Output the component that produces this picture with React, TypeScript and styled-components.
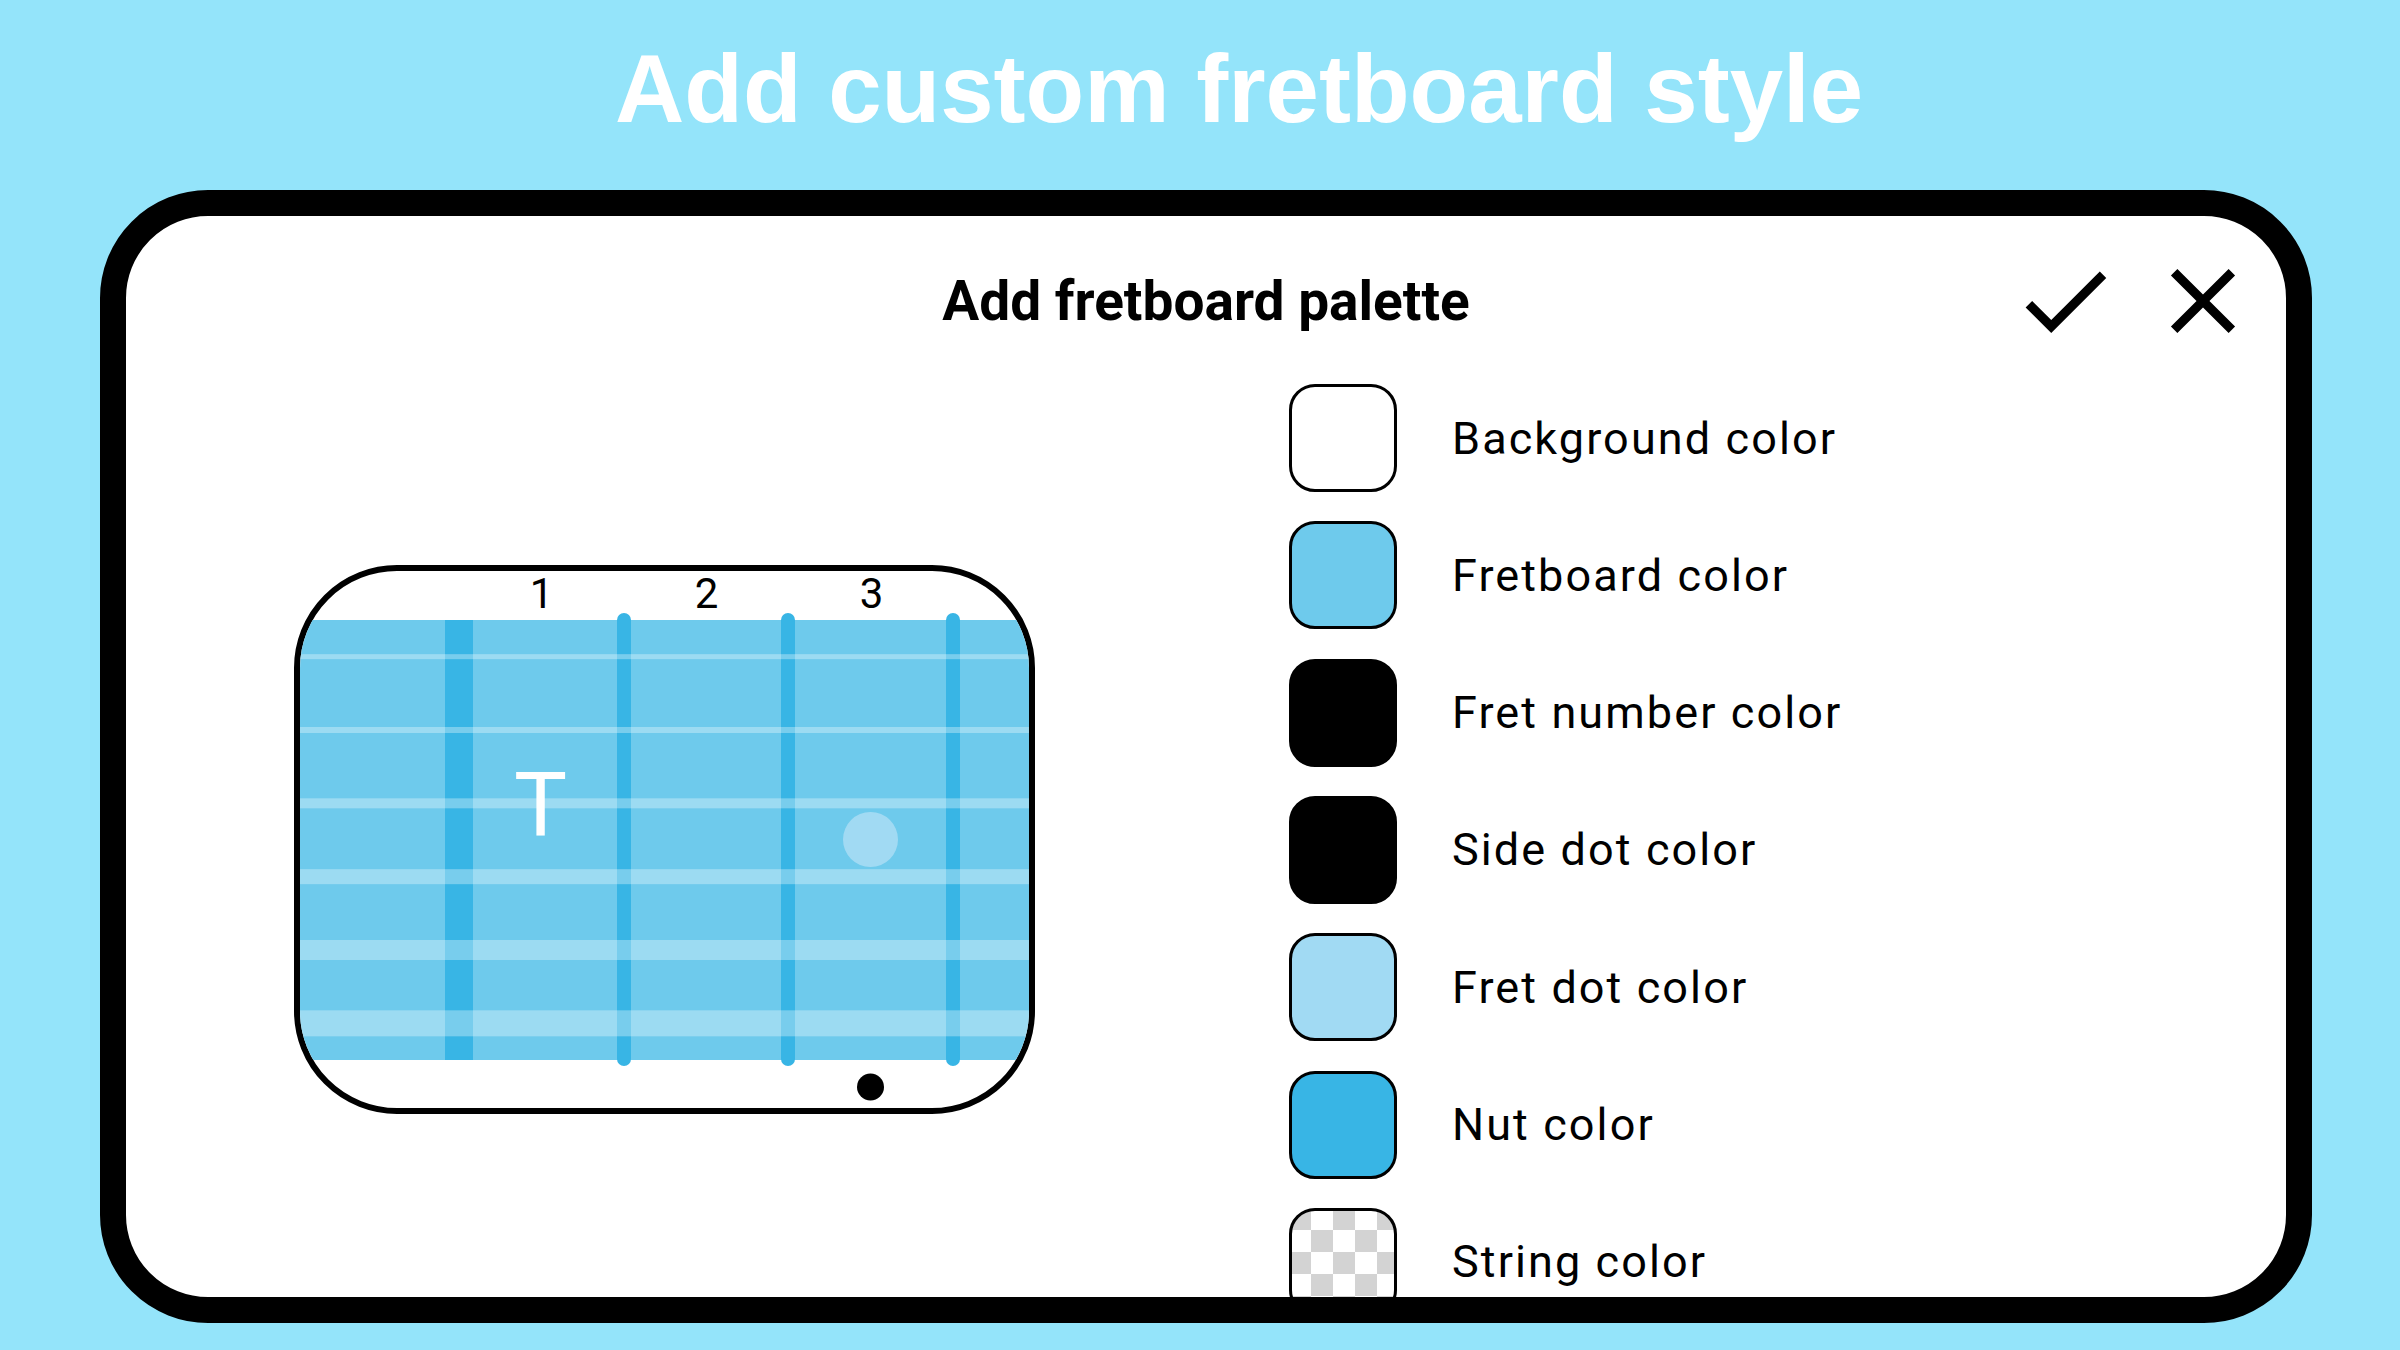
import styled, { createGlobalStyle } from "styled-components";

const SKY = "#94e4fa";
const FRETBOARD = "#6ecaec";
const NUT = "#38b5e5";
const FRET_DOT = "#a1daf3";

const paletteItems = [
  { name: "Background color", color: "#ffffff" },
  { name: "Fretboard color", color: FRETBOARD },
  { name: "Fret number color", color: "#000000" },
  { name: "Side dot color", color: "#000000" },
  { name: "Fret dot color", color: FRET_DOT },
  { name: "Nut color", color: NUT },
  { name: "String color", color: "transparent" },
];

// preview drawing, in px of the preview's inner box (below the number row)
const BOARD_WIDTH = 729;
const BOARD_HEIGHT = 440;
const ROW = BOARD_HEIGHT / 6;
const STRING_WIDTHS = [5, 6, 10, 15, 20, 26];
const NUT_X = 145;
const FRETS = [324, 488, 653];
const FRET_CENTERS = [241.5, 406, 570.5];

const GlobalStyle = createGlobalStyle`
  html, body {
    margin: 0;
    padding: 0;
    background: ${SKY};
  }
  body {
    font-family: Roboto, "Noto Sans", sans-serif;
  }
`;

const Page = styled.div`
  width: 2400px;
  height: 1350px;
  overflow: hidden;
  display: flex;
  flex-direction: column;
  background: ${SKY};
`;

const Headline = styled.h1`
  margin: 0;
  height: 190px;
  box-sizing: border-box;
  padding: 35px 0 0 78px;
  text-align: center;
  font-family: "Liberation Sans", Arial, sans-serif;
  font-weight: 700;
  font-size: 96px;
  line-height: 107px;
  color: #ffffff;
`;

const Device = styled.div`
  width: 2212px;
  height: 1133px;
  margin-left: 100px;
  box-sizing: border-box;
  border: 26px solid #000;
  border-radius: 108px;
  background: #fff;
  overflow: hidden;
  display: flex;
  flex-direction: column;
`;

const DialogHeader = styled.div`
  display: grid;
  grid-template-columns: 1fr auto 1fr;
  align-items: center;
  padding: 30px 28px 0;
`;

const DialogTitle = styled.h2`
  grid-column: 2;
  margin: 0;
  font-family: Roboto, sans-serif;
  font-weight: 700;
  font-size: 55px;
  line-height: 64px;
  color: #000;
`;

const Actions = styled.div`
  grid-column: 3;
  justify-self: end;
  display: flex;
  gap: 28px;
`;

const IconButton = styled.button`
  width: 110px;
  height: 110px;
  padding: 0;
  border: none;
  background: none;
  display: flex;
  svg {
    width: 110px;
    height: 110px;
    fill: #000;
  }
`;

const Body = styled.div`
  display: flex;
  flex: 1;
`;

const PreviewColumn = styled.div`
  width: 1163px;
  box-sizing: border-box;
  padding: 209px 0 0 168px;
`;

const Preview = styled.div`
  width: 741px;
  height: 549px;
  box-sizing: border-box;
  border: 6px solid #000;
  border-radius: 103px;
  background: #fff;
  overflow: hidden;
  svg {
    display: block;
  }
`;

const FretNumbers = styled.div`
  display: grid;
  grid-template-columns: 159px repeat(3, 165px) 1fr;
  grid-template-rows: 42px;
  height: 42px;
`;

const FretNumber = styled.span`
  text-align: center;
  font-family: Roboto, sans-serif;
  font-size: 42px;
  line-height: 45px;
  color: #000;
`;

const PaletteList = styled.ul`
  margin: 28px 0 0;
  padding: 0;
  list-style: none;
  display: flex;
  flex-direction: column;
  gap: 29.33px;
`;

const PaletteRow = styled.li`
  display: flex;
  align-items: center;
  gap: 55px;
`;

const Swatch = styled.div<{ $color: string }>`
  width: 108px;
  height: 108px;
  flex-shrink: 0;
  box-sizing: border-box;
  border: 3px solid #000;
  border-radius: 26px;
  background: ${({ $color }) =>
    $color === "transparent"
      ? "repeating-conic-gradient(#ffffff 0 25%, #d3d3d3 0 50%) 0 0 / 44px 44px border-box"
      : $color};
`;

const SwatchLabel = styled.span`
  font-family: Roboto, sans-serif;
  font-size: 45px;
  line-height: 53px;
  letter-spacing: 2.1px;
  color: #000;
`;

function CheckIcon() {
  return (
    <svg viewBox="0 0 24 24">
      <path d="M9 16.17L4.83 12l-1.42 1.41L9 19 21 7l-1.41-1.41z" />
    </svg>
  );
}

function CloseIcon() {
  return (
    <svg viewBox="0 0 24 24">
      <path d="M19 6.41L17.59 5 12 10.59 6.41 5 5 6.41 10.59 12 5 17.59 6.41 19 12 13.41 17.59 19 19 17.59 13.41 12z" />
    </svg>
  );
}

function FretboardPreview() {
  const w = BOARD_WIDTH;
  const h = 495;
  return (
    <Preview>
      <FretNumbers>
        <span />
        {[1, 2, 3].map((n) => (
          <FretNumber key={n}>{n}</FretNumber>
        ))}
      </FretNumbers>
      {/* y = 0 is the top of the board; the 7px above it hold the fret caps */}
      <svg width={w} height={h} viewBox={`0 -7 ${w} ${h}`}>
        <rect x={0} y={0} width={w} height={BOARD_HEIGHT} fill={FRETBOARD} />
        <rect x={NUT_X} y={0} width={28} height={BOARD_HEIGHT} fill={NUT} />
        {FRETS.map((x) => (
          <line
            key={x}
            x1={x}
            x2={x}
            y1={0}
            y2={BOARD_HEIGHT - 1}
            stroke={NUT}
            strokeWidth={14}
            strokeLinecap="round"
          />
        ))}
        <circle cx={FRET_CENTERS[2]} cy={219.5} r={27.5} fill={FRET_DOT} />
        {STRING_WIDTHS.map((sw, i) => (
          <rect
            key={i}
            x={0}
            y={ROW * (i + 0.5) - sw / 2}
            width={w}
            height={sw}
            fill="rgba(255,255,255,0.32)"
          />
        ))}
        <text
          x={FRET_CENTERS[0] - 1}
          y={215.5}
          textAnchor="middle"
          fontFamily="Roboto, sans-serif"
          fontSize={89}
          fill="#fff"
        >
          T
        </text>
        <circle cx={FRET_CENTERS[2]} cy={467} r={13.5} fill="#000" />
      </svg>
    </Preview>
  );
}

export default function App() {
  return (
    <>
      <GlobalStyle />
      <Page>
        <Headline>Add custom fretboard style</Headline>
        <Device>
          <DialogHeader>
            <DialogTitle>Add fretboard palette</DialogTitle>
            <Actions>
              <IconButton aria-label="Save">
                <CheckIcon />
              </IconButton>
              <IconButton aria-label="Close">
                <CloseIcon />
              </IconButton>
            </Actions>
          </DialogHeader>
          <Body>
            <PreviewColumn>
              <FretboardPreview />
            </PreviewColumn>
            <PaletteList>
              {paletteItems.map((item) => (
                <PaletteRow key={item.name}>
                  <Swatch $color={item.color} />
                  <SwatchLabel>{item.name}</SwatchLabel>
                </PaletteRow>
              ))}
            </PaletteList>
          </Body>
        </Device>
      </Page>
    </>
  );
}
